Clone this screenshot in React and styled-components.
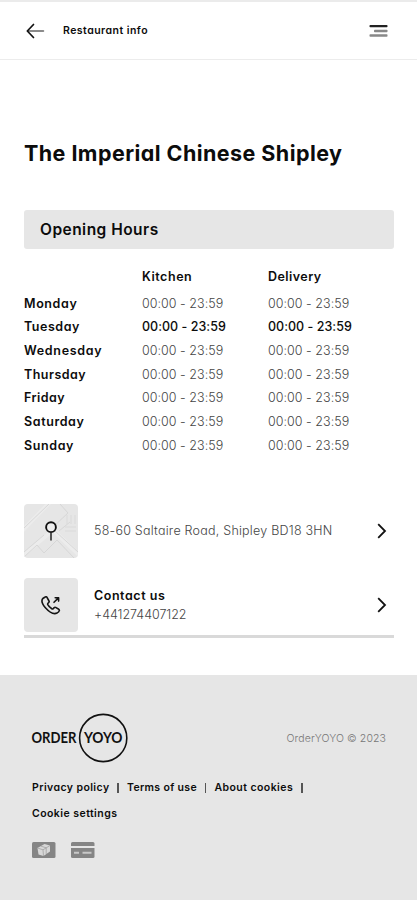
import styled, { createGlobalStyle } from "styled-components";

const GlobalStyle = createGlobalStyle`
  * {
    box-sizing: border-box;
  }
  body {
    margin: 0;
    background-color: #fff;
    color: #0c0c0c;
    font-family: Inter, sans-serif;
    font-feature-settings: "cv11";
  }
  svg {
    display: block;
    flex-shrink: 0;
  }
`;

const Page = styled.div`
  display: flex;
  flex-direction: column;
  width: 100%;
  min-height: 900px;
`;

const Header = styled.header`
  display: flex;
  align-items: center;
  height: 60px;
  padding: 0 29px 0 26px;
  border-top: 2px solid #ebebeb;
  border-bottom: 1px solid #ececec;
`;

const HeaderTitle = styled.span`
  flex: 1;
  margin-left: 18px;
  font-size: 10.5px;
  font-weight: 600;
  letter-spacing: 0.47px;
`;

const Main = styled.main`
  display: flex;
  flex-direction: column;
  height: 615px;
  padding: 78px 23px 0 24px;
`;

const Title = styled.h1`
  margin: 0;
  font-size: 21.5px;
  font-weight: 700;
  line-height: 30px;
  letter-spacing: 0.44px;
  white-space: nowrap;
`;

const SectionTitle = styled.h2`
  margin: 42px 0 0;
  padding-left: 16px;
  border-radius: 3px;
  background-color: #e6e6e6;
  font-size: 15.5px;
  font-weight: 600;
  line-height: 39px;
  letter-spacing: 0.47px;
`;

const Hours = styled.div`
  display: grid;
  grid-template-columns: 118px 126px 1fr;
  grid-template-rows: 31px;
  grid-auto-rows: 23.67px;
  align-items: center;
  margin-top: 11.5px;
  font-size: 12.5px;
  white-space: nowrap;
`;

const Label = styled.span`
  font-weight: 600;
  letter-spacing: ${(p) => p.$spacing || 0.55}px;
`;

const Time = styled.span`
  color: ${(p) => (p.$today ? "#0c0c0c" : "#444")};
  font-weight: ${(p) => (p.$today ? 500 : 300)};
  letter-spacing: 0.03px;
`;

const Links = styled.div`
  display: flex;
  flex-direction: column;
  gap: 20px;
  margin-top: 46.5px;
  padding-bottom: 3px;
  border-bottom: 3px solid #d9d9d9;
`;

const LinkRow = styled.div`
  display: flex;
  align-items: center;
  height: 54px;
  padding-right: 7px;
`;

const Thumb = styled.div`
  display: flex;
  align-items: center;
  justify-content: center;
  width: 54px;
  height: 54px;
  border-radius: 4px;
  background-color: #e6e6e6;
  overflow: hidden;
`;

const LinkText = styled.div`
  display: flex;
  flex: 1;
  flex-direction: column;
  margin-left: 16px;
  font-size: 12.5px;
  line-height: 19px;
  white-space: nowrap;
`;

const Detail = styled.span`
  color: #444;
  font-weight: 300;
  letter-spacing: ${(p) => p.$spacing}px;
`;

const Footer = styled.footer`
  flex: 1;
  padding: 38px 31px 0;
  background-color: #e6e6e6;
`;

const FooterTop = styled.div`
  display: flex;
  align-items: center;
  justify-content: space-between;
`;

const Copyright = styled.span`
  color: #777;
  font-size: 10.5px;
  font-weight: 300;
  letter-spacing: 0.1px;
`;

const FooterNav = styled.nav`
  display: flex;
  flex-wrap: wrap;
  margin: 12px 0 0 1px;
  font-size: 10.5px;
  font-weight: 600;
  line-height: 26px;
  white-space: nowrap;
`;

const FooterLink = styled.a`
  letter-spacing: ${(p) => p.$spacing}px;
`;

const Divider = styled.i`
  align-self: center;
  width: 1.5px;
  height: 10px;
  margin: 0 8px;
  background-color: #555;
`;

const Payments = styled.div`
  display: flex;
  gap: 15px;
  margin: 15px 0 0 1px;
`;

const days = [
  { name: "Monday", spacing: 0.6 },
  { name: "Tuesday", spacing: 0.53, today: true },
  { name: "Wednesday", spacing: 0.68 },
  { name: "Thursday", spacing: 0.48 },
  { name: "Friday", spacing: 0.47 },
  { name: "Saturday", spacing: 0.6 },
  { name: "Sunday", spacing: 0.6 },
];

const footerLinks = [
  { text: "Privacy policy", spacing: 0.42 },
  { text: "Terms of use", spacing: 0.33 },
  { text: "About cookies", spacing: 0.44 },
];

const BackIcon = () => (
  <svg width="19" height="16" viewBox="0 0 19 16" fill="none" strokeLinecap="round" strokeLinejoin="round">
    <path d="M2 8H17.5" stroke="#666" strokeWidth="1.5" />
    <path d="M7.5 1.5L1.3 8L7.5 14.5" stroke="#111" strokeWidth="1.7" />
  </svg>
);

const MenuIcon = () => (
  <svg width="19" height="14" viewBox="0 0 19 14">
    <rect x="0.5" y="1" width="18" height="2.2" rx="0.8" fill="#222" />
    <rect x="5" y="5.8" width="13.5" height="2.4" rx="0.8" fill="#888" />
    <rect x="0.5" y="10.2" width="18" height="2.6" rx="0.8" fill="#888" />
  </svg>
);

const ChevronIcon = () => (
  <svg width="10" height="16" viewBox="0 0 10 16" fill="none" stroke="#111" strokeWidth="1.8">
    <path d="M1.2 1.2L8 8L1.2 14.8" />
  </svg>
);

const MapIcon = () => (
  <svg width="54" height="54" viewBox="0 0 54 54" fill="none">
    <g stroke="#ececec" strokeWidth="4">
      <path d="M-2 27L27 -3" />
      <path d="M-2 52L34 22" />
      <path d="M28 25L56 52" />
    </g>
    <g stroke="#d5d5d5" strokeWidth="0.9">
      <path d="M0 24L25 0" />
      <path d="M0 48L20 31" />
      <path d="M0 53L13 41L20 49L33 36L50 54" />
      <path d="M31 27L54 48" />
      <path d="M30 22L44 9L36 0" />
      <path d="M35 27L46 18" />
    </g>
    <path d="M43 11V20M47 11V20M51 11V20M41 23H52M41 27H52" stroke="#dadada" />
    <circle cx="27" cy="23.2" r="4.9" fill="#eee" stroke="#111" strokeWidth="1.9" />
    <path d="M27 28.5V36.5" stroke="#222" strokeWidth="1.5" />
  </svg>
);

const PhoneIcon = () => (
  <svg width="20" height="20" viewBox="0 0 20 20" fill="none" stroke="#161616" strokeWidth="1.6" strokeLinecap="round" strokeLinejoin="round">
    <path d="M4.2 2L2.2 3.2C.3 5 .9 8.8 4.4 12.8C8.4 17.3 13 19.4 16 18.1C17.2 17.5 18.2 16.4 18.4 15.4C18.5 14.9 18.2 14.6 17.8 14.3L14.6 12.4C14.1 12.1 13.6 12.2 13.2 12.6L12.2 13.7C11.8 14.1 11.3 14.1 10.8 13.8C9.2 12.8 7.6 11.1 6.8 9.6C6.5 9 6.6 8.6 7 8.2L7.8 7.4C8.2 7 8.3 6.5 8 6L6 2.4C5.6 1.7 4.9 1.5 4.2 2Z" />
    <path d="M13 7.3L17.2 3.1M14.2 2.7H17.6V6.1" />
  </svg>
);

const Logo = () => (
  <svg width="97" height="50" viewBox="0 0 97 50">
    <circle cx="72.2" cy="25" r="23.6" fill="none" stroke="#111" strokeWidth="1.6" />
    <g fill="#111" fontFamily="Lato, sans-serif" fontSize="15" fontWeight="700">
      <text x="0.5" y="30.3" textLength="45" lengthAdjust="spacingAndGlyphs">ORDER</text>
      <text x="53" y="30.3" textLength="38.5" lengthAdjust="spacingAndGlyphs">YOYO</text>
    </g>
  </svg>
);

const CashIcon = () => (
  <svg width="24" height="16" viewBox="0 0 24 16">
    <rect x="0" y="0" width="23.5" height="16" rx="1.5" fill="#858585" />
    <path d="M5.5 6L12.5 2L18 3.5V9.5L11.5 14L6.5 12.5Z" fill="#d8d8d8" />
    <path d="M5.5 6L11 7.8L18 3.5M11 7.8L11.5 14M9 4.2L14.2 5.8V12" fill="none" stroke="#a2a2a2" strokeWidth="0.8" />
  </svg>
);

const CardIcon = () => (
  <svg width="24" height="16" viewBox="0 0 24 16">
    <path d="M1.5 0H22A1.5 1.5 0 0 1 23.5 1.5V4H0V1.5A1.5 1.5 0 0 1 1.5 0Z" fill="#858585" />
    <path d="M0 6H23.5V14.5A1.5 1.5 0 0 1 22 16H1.5A1.5 1.5 0 0 1 0 14.5Z" fill="#858585" />
    <path d="M3 10.7H8M11.5 10.7H20.5" stroke="#c8c8c8" strokeWidth="2" />
  </svg>
);

export default function App() {
  return (
    <Page>
      <GlobalStyle />
      <Header>
        <BackIcon />
        <HeaderTitle>Restaurant info</HeaderTitle>
        <MenuIcon />
      </Header>
      <Main>
        <Title>The Imperial Chinese Shipley</Title>
        <SectionTitle>Opening Hours</SectionTitle>
        <Hours>
          <span />
          <Label>Kitchen</Label>
          <Label $spacing={0.45}>Delivery</Label>
          {days.map(({ name, spacing, today }) => [
            <Label key={name} $spacing={spacing}>{name}</Label>,
            <Time key={`${name}-kitchen`} $today={today}>00:00 - 23:59</Time>,
            <Time key={`${name}-delivery`} $today={today}>00:00 - 23:59</Time>,
          ])}
        </Hours>
        <Links>
          <LinkRow>
            <Thumb><MapIcon /></Thumb>
            <LinkText>
              <Detail $spacing={0.23}>58-60 Saltaire Road, Shipley BD18 3HN</Detail>
            </LinkText>
            <ChevronIcon />
          </LinkRow>
          <LinkRow>
            <Thumb><PhoneIcon /></Thumb>
            <LinkText>
              <Label>Contact us</Label>
              <Detail $spacing={-0.04}>+441274407122</Detail>
            </LinkText>
            <ChevronIcon />
          </LinkRow>
        </Links>
      </Main>
      <Footer>
        <FooterTop>
          <Logo />
          <Copyright>OrderYOYO © 2023</Copyright>
        </FooterTop>
        <FooterNav>
          {footerLinks.map(({ text, spacing }) => [
            <FooterLink key={text} $spacing={spacing}>{text}</FooterLink>,
            <Divider key={`${text}-divider`} />,
          ])}
          <FooterLink $spacing={0.45}>Cookie settings</FooterLink>
        </FooterNav>
        <Payments>
          <CashIcon />
          <CardIcon />
        </Payments>
      </Footer>
    </Page>
  );
}
